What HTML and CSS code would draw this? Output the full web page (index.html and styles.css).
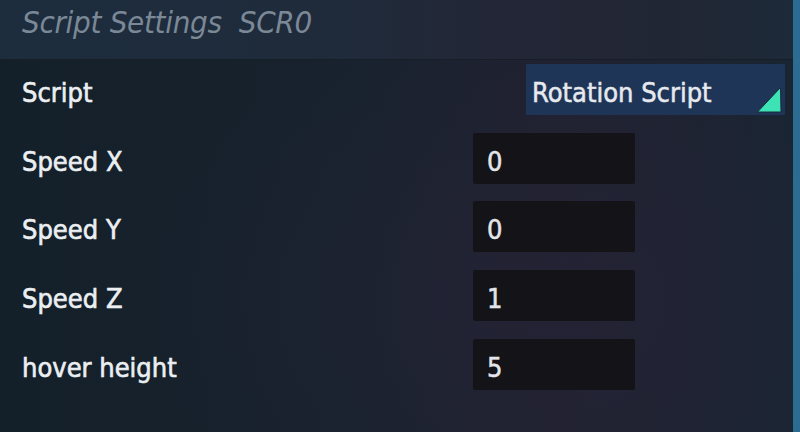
FILE: index.html
```html
<!DOCTYPE html>
<html>
<head>
<meta charset="utf-8">
<link rel="stylesheet" href="styles.css">
</head>
<body>
<div class="panel">
  <div class="header"><span class="title">Script Settings&nbsp; SCR0</span></div>
  <div class="rows">
    <div class="label">Script</div>
    <div class="cell right">
      <div class="dropdown">Rotation Script
        <svg class="tri" width="27" height="28" viewBox="0 0 27 28"><path d="M24.5 1.5 L25 26 L1.5 26 Z" fill="#3ee3b5" stroke="#1a2a3a" stroke-width="1" stroke-linejoin="round"/></svg>
      </div>
    </div>
    <div class="label">Speed X</div>
    <div class="cell"><div class="input">0</div></div>
    <div class="label">Speed Y</div>
    <div class="cell"><div class="input">0</div></div>
    <div class="label">Speed Z</div>
    <div class="cell"><div class="input">1</div></div>
    <div class="label">hover height</div>
    <div class="cell"><div class="input">5</div></div>
  </div>
</div>
</body>
</html>
```

FILE: styles.css
```css
html, body {
  margin: 0;
  padding: 0;
  width: 800px;
  height: 432px;
  overflow: hidden;
}
body {
  font-family: "DejaVu Sans Condensed", "DejaVu Sans", sans-serif;
  background: #161f2a;
}
.panel {
  width: 793px;
  height: 432px;
  border-right: 7px solid #2c6b92;
  background:
    radial-gradient(ellipse 420px 300px at 560px 300px, rgba(40,36,56,0.55), rgba(40,36,56,0) 100%),
    linear-gradient(90deg, #142029 0%, #18222e 45%, #1f2130 70%, #1c2331 88%, #182532 100%);
}
.header {
  height: 59px;
  box-sizing: border-box;
  padding-left: 22px;
  background: linear-gradient(90deg, #1d2d3e 0%, #1f2b3b 40%, #232636 65%, #212634 85%, #1c2a39 100%);
  box-shadow: 0 1px 0 #161e28;
}
.title {
  display: block;
  font-style: italic;
  font-size: 31px;
  line-height: 44px;
  color: #7b8896;
  letter-spacing: -0.3px;
}
.rows {
  display: grid;
  grid-template-columns: 473px 320px;
  grid-auto-rows: 51px;
  row-gap: 17.7px;
  padding-top: 5px;
}
.label {
  padding-left: 22px;
  padding-top: 6px;
  display: flex;
  align-items: center;
  font-size: 27px;
  color: #eceff2;
  -webkit-text-stroke: 0.6px #eceff2;
}
.cell {
  display: flex;
}
.cell.right {
  justify-content: flex-end;
  padding-right: 8px;
}
.dropdown {
  position: relative;
  width: 259px;
  height: 51px;
  box-sizing: border-box;
  background: #1f3557;
  border-radius: 1px;
  padding: 6px 0 0 6px;
  display: flex;
  align-items: center;
  font-size: 27px;
  color: #e6e9ee;
  -webkit-text-stroke: 0.5px #e6e9ee;
}
.tri {
  position: absolute;
  right: 2px;
  bottom: 1px;
}
.input {
  width: 162px;
  height: 51px;
  box-sizing: border-box;
  background: #131318;
  border-radius: 2px;
  padding: 6px 0 0 14px;
  display: flex;
  align-items: center;
  font-size: 27px;
  color: #e3e5ea;
  -webkit-text-stroke: 0.5px #e3e5ea;
}
```
